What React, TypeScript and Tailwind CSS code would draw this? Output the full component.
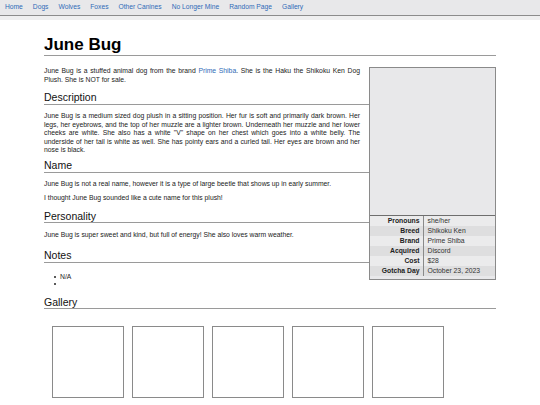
import React from "react";

const navLinks = [
  "Home",
  "Dogs",
  "Wolves",
  "Foxes",
  "Other Canines",
  "No Longer Mine",
  "Random Page",
  "Gallery",
];

const facts: [string, string][] = [
  ["Pronouns", "she/her"],
  ["Breed", "Shikoku Ken"],
  ["Brand", "Prime Shiba"],
  ["Acquired", "Discord"],
  ["Cost", "$28"],
  ["Gotcha Day", "October 23, 2023"],
];

const Heading: React.FC<{ children: React.ReactNode; className?: string }> = ({
  children,
  className = "mt-[7px]",
}) => (
  <h2
    className={`mb-[7.5px] border-b border-[#9a9a9a] text-[10.5px] leading-[12.6px] text-[#111] ${className}`}
  >
    {children}
  </h2>
);

const Para: React.FC<{ children: React.ReactNode; className?: string }> = ({
  children,
  className = "my-[5.5px]",
}) => (
  <p className={`pr-[9px] text-justify text-[6.8px] leading-[8.5px] ${className}`}>
    {children}
  </p>
);

const App: React.FC = () => {
  return (
    <div className="min-h-screen bg-white font-['Liberation_Sans',Arial,sans-serif] text-[#222]">
      <nav className="flex h-[16px] items-center border-b border-[#8c8c8c] bg-[#e8e8ea] text-[6.7px] text-[#2f6bb8]">
        {navLinks.map((link) => (
          <a key={link} href="#" className="px-[5px]">
            {link}
          </a>
        ))}
      </nav>
      <div className="h-[4px] bg-[#efeff0]" />

      <main className="mx-[44px] mt-[15px]">
        <h1 className="border-b border-[#9a9a9a] text-[17px] font-bold leading-[1.2] text-black">
          June Bug
        </h1>

        <div className="mt-[11px] flex items-start">
          <div className="min-w-0 flex-1">
            <Para className="mt-0 mb-[5.5px]">
              June Bug is a stuffed animal dog from the brand{" "}
              <a href="#" className="text-[#2f6bb8]">
                Prime Shiba
              </a>
              . She is the Haku the Shikoku Ken Dog Plush. She is NOT for sale.
            </Para>

            <Heading>Description</Heading>
            <Para className="mt-[5.5px] mb-[4px]">
              June Bug is a medium sized dog plush in a sitting position. Her fur is soft and
              primarily dark brown. Her legs, her eyebrows, and the top of her muzzle are a lighter
              brown. Underneath her muzzle and her lower cheeks are white. She also has a white "V"
              shape on her chest which goes into a white belly. The underside of her tail is white as
              well. She has pointy ears and a curled tail. Her eyes are brown and her nose is black.
            </Para>

            <Heading className="mt-[4px]">Name</Heading>
            <Para>
              June Bug is not a real name, however it is a type of large beetle that shows up in
              early summer.
            </Para>
            <Para>I thought June Bug sounded like a cute name for this plush!</Para>

            <Heading>Personality</Heading>
            <Para>
              June Bug is super sweet and kind, but full of energy! She also loves warm weather.
            </Para>

            <Heading className="mt-[10px] mb-[10px]">Notes</Heading>
            <ul className="pl-[10px] text-[6.8px] leading-[7.5px]">
              <li className="flex h-[7.5px] items-center">
                <span className="mr-[4px] h-[2px] w-[2px] shrink-0 rounded-full bg-[#222]" />
                N/A
              </li>
              <li className="flex h-[7.5px] items-center">
                <span className="mr-[4px] h-[2px] w-[2px] shrink-0 rounded-full bg-[#222]" />
              </li>
            </ul>
          </div>

          <aside className="w-[127px] shrink-0 border border-[#8a8a8a] bg-[#e8e8ea] text-[6.8px]">
            <div className="h-[148px] border-b border-[#6e6e6e]" />
            <table className="w-full border-collapse">
              <tbody>
                {facts.map(([label, value], i) => (
                  <tr key={label} className={i % 2 === 1 ? "bg-[#dededf]" : "bg-[#ebebec]"}>
                    <th className="h-[10px] w-[53px] border-r border-[#8a8a8a] pr-[3px] text-right font-bold leading-[10px] text-[#222]">
                      {label}
                    </th>
                    <td className="h-[10px] pl-[4px] leading-[10px] text-[#333]">{value}</td>
                  </tr>
                ))}
              </tbody>
            </table>
            <div className="h-[3px]" />
          </aside>
        </div>

        <Heading className="mt-[8px] mb-[17px]">Gallery</Heading>
        <div className="flex gap-[8px] pl-[8px]">
          {[0, 1, 2, 3, 4].map((n) => (
            <div key={n} className="h-[72px] w-[72px] border border-[#8a8a8a] bg-white" />
          ))}
        </div>
      </main>
    </div>
  );
};

export default App;
